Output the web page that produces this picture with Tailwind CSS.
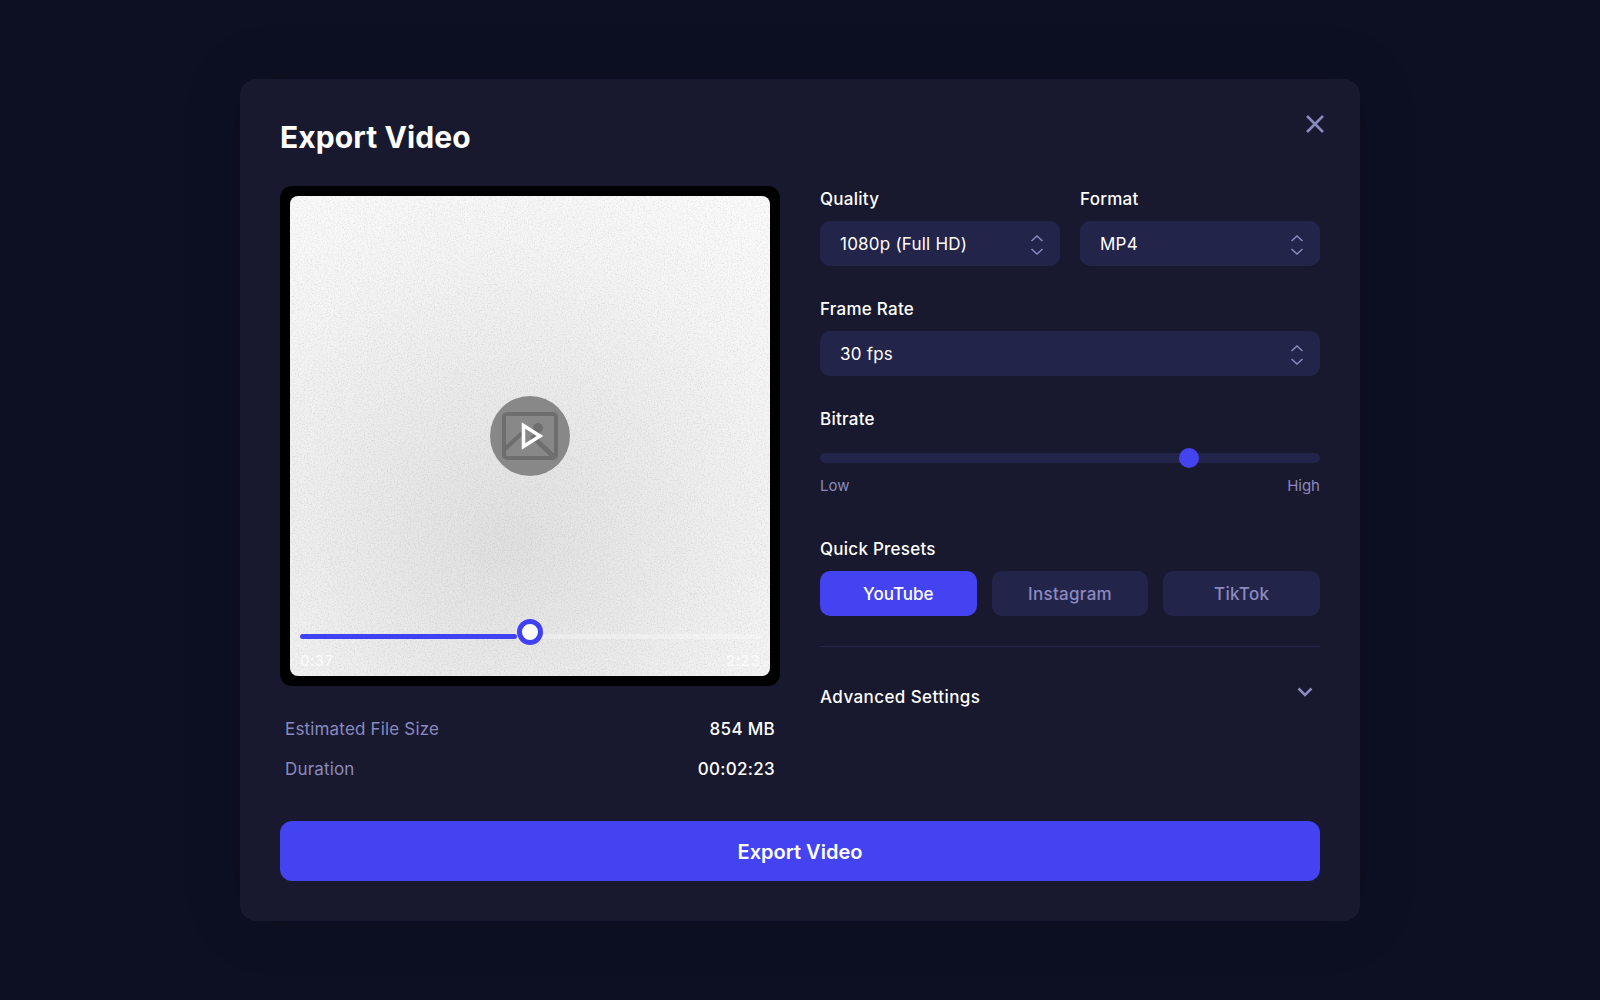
<!DOCTYPE html>
<html lang="en">

<head>
  <meta charset="UTF-8">
  <meta name="viewport" content="width=device-width, initial-scale=1.0">
  <title>Export Video</title>
  <script src="https://cdn.jsdelivr.net/npm/@tailwindcss/browser@4"></script>
</head>

<body class="bg-[#0d0f23] font-['Inter',sans-serif] text-white h-[1000px] overflow-hidden flex items-center justify-center">
  <!-- modal -->
  <div class="relative w-[1120px] h-[842px] bg-[#18192e] rounded-2xl p-10 shadow-[0_0_60px_rgba(0,0,0,0.15)]">
    <h1 class="text-[30px] leading-9 font-bold tracking-[0.1px]">Export Video</h1>
    <button class="absolute right-[33px] top-[33px] w-6 h-6 text-[#8a8abf]">
      <svg viewBox="0 0 24 24" class="w-6 h-6" fill="none" stroke="currentColor" stroke-width="2.500">
        <path d="M4 4l16 16M20 4L4 20" />
      </svg>
    </button>

    <div class="flex gap-10 mt-[31px]">
      <!-- preview -->
      <div class="w-[500px]">
        <div class="bg-black rounded-xl p-2.5 h-[500px]">
          <div class="relative h-[480px] rounded-lg overflow-hidden bg-[radial-gradient(circle_at_45%_72%,#e0e0e0,#e9e9e9_30%,#f5f5f5_70%,#fbfbfb_100%)]">
            <svg class="absolute inset-0 w-full h-full opacity-[0.07]">
              <filter id="grain">
                <feTurbulence type="fractalNoise" baseFrequency="0.7" numOctaves="2" seed="4" />
                <feColorMatrix type="matrix" values="0 0 0 0 0  0 0 0 0 0  0 0 0 0 0  2.500 0 0 0 -1.100" />
              </filter>
              <rect width="100%" height="100%" filter="url(#grain)" />
            </svg>

            <!-- play button -->
            <svg class="absolute left-[200px] top-[200px] w-20 h-20" viewBox="0 0 80 80" fill="none">
              <circle cx="40" cy="40" r="40" fill="#888888" />
              <g stroke="#6e6e6e" stroke-width="4">
                <rect x="14" y="18" width="52" height="44" rx="3" />
                <path d="M14 54l18-17" />
                <path d="M42 40l21 20" stroke-width="5" />
              </g>
              <circle cx="48" cy="32" r="5" fill="#6e6e6e" />
              <path d="M33.500 29.500L50 40 33.500 50.500z" stroke="#ffffff" stroke-width="3.500" stroke-linejoin="miter" />
            </svg>

            <!-- scrubber -->
            <div class="absolute left-2.5 right-2.5 top-[438px] h-[5px] rounded-full bg-white/30">
              <div class="h-full w-[217px] rounded-full bg-[#4040f4]"></div>
            </div>
            <div class="absolute left-[227px] top-[423px] w-[26px] h-[26px] rounded-full bg-white border-[5px] border-[#4040f4]"></div>
            <div class="absolute left-2.5 right-2.5 top-[455px] flex justify-between text-[15px] leading-5 tracking-[0.5px] text-white/80">
              <span>0:37</span>
              <span>2:23</span>
            </div>
          </div>
        </div>

        <div class="px-[5px] mt-[31px] flex flex-col gap-[16px] text-[17px] leading-6 tracking-[0.17px]">
          <div class="flex justify-between">
            <span class="text-[#8a8abf]">Estimated File Size</span>
            <span class="font-medium tracking-[0.3px]">854 MB</span>
          </div>
          <div class="flex justify-between">
            <span class="text-[#8a8abf]">Duration</span>
            <span class="font-medium tracking-[0.3px]">00:02:23</span>
          </div>
        </div>
      </div>

      <!-- settings -->
      <div class="w-[500px]">
        <div class="flex gap-5">
          <div class="w-[240px]">
            <label class="block text-[17px] leading-[26px] tracking-[0.25px] font-medium mb-[9px]">Quality</label>
            <div class="h-[45px] rounded-[10px] bg-[#23244a] pl-5 pr-4 flex items-center justify-between text-[17px] tracking-[0.22px]">
              <span class="pt-0.5">1080p (Full HD)</span>
              <svg class="w-3.5 h-6 mt-0.5 text-[#8a8abf]" viewBox="0 0 14 24" fill="none" stroke="currentColor" stroke-width="1.500">
                <path d="M1.500 8L7 3l5.500 5M1.500 16L7 21l5.500-5" />
              </svg>
            </div>
          </div>
          <div class="w-[240px]">
            <label class="block text-[17px] leading-[26px] tracking-[0.25px] font-medium mb-[9px]">Format</label>
            <div class="h-[45px] rounded-[10px] bg-[#23244a] pl-5 pr-4 flex items-center justify-between text-[17px] tracking-[0.22px]">
              <span class="pt-0.5">MP4</span>
              <svg class="w-3.5 h-6 mt-0.5 text-[#8a8abf]" viewBox="0 0 14 24" fill="none" stroke="currentColor" stroke-width="1.500">
                <path d="M1.500 8L7 3l5.500 5M1.500 16L7 21l5.500-5" />
              </svg>
            </div>
          </div>
        </div>

        <div class="mt-[30px]">
          <label class="block text-[17px] leading-[26px] tracking-[0.25px] font-medium mb-[9px]">Frame Rate</label>
          <div class="h-[45px] rounded-[10px] bg-[#23244a] pl-5 pr-4 flex items-center justify-between text-[17px] tracking-[0.22px]">
            <span class="pt-0.5">30 fps</span>
            <svg class="w-3.5 h-6 mt-0.5 text-[#8a8abf]" viewBox="0 0 14 24" fill="none" stroke="currentColor" stroke-width="1.500">
              <path d="M1.500 8L7 3l5.500 5M1.500 16L7 21l5.500-5" />
            </svg>
          </div>
        </div>

        <div class="mt-[30px]">
          <label class="block text-[17px] leading-[26px] tracking-[0.25px] font-medium mb-[21px]">Bitrate</label>
          <div class="relative h-2.5 rounded-full bg-[#23244a]">
            <div class="absolute left-[359px] -top-[5px] w-5 h-5 rounded-full bg-[#4343f1]"></div>
          </div>
          <div class="flex justify-between mt-[13px] text-[15px] leading-5 text-[#8a8abf]">
            <span>Low</span>
            <span>High</span>
          </div>
        </div>

        <div class="mt-10">
          <label class="block text-[17px] leading-[26px] tracking-[0.25px] font-medium mb-[9px]">Quick Presets</label>
          <div class="grid grid-cols-3 gap-[15px] text-[17px] font-medium">
            <button class="h-[45px] pt-0.5 rounded-[10px] bg-[#4343f1]">YouTube</button>
            <button class="h-[45px] pt-0.5 rounded-[10px] bg-[#23244a] text-[#8a8abf] tracking-[0.3px]">Instagram</button>
            <button class="h-[45px] pt-0.5 rounded-[10px] bg-[#23244a] text-[#8a8abf] tracking-[0.3px]">TikTok</button>
          </div>
        </div>

        <div class="mt-[30px] border-t border-[#23244a] pt-[38px] flex justify-between items-start">
          <span class="text-[17px] leading-6 font-medium tracking-[0.42px]">Advanced Settings</span>
          <svg class="w-4 h-3 mr-[7px] mt-[1px] text-[#8a8abf]" viewBox="0 0 16 12" fill="none" stroke="currentColor" stroke-width="2.500">
            <path d="M1.500 2.500L8 9l6.500-6.500" />
          </svg>
        </div>
      </div>
    </div>

    <button class="absolute left-10 right-10 bottom-10 h-[60px] pt-[2px] rounded-xl bg-[#4343f1] text-xl font-semibold">Export Video</button>
  </div>
</body>

</html>
